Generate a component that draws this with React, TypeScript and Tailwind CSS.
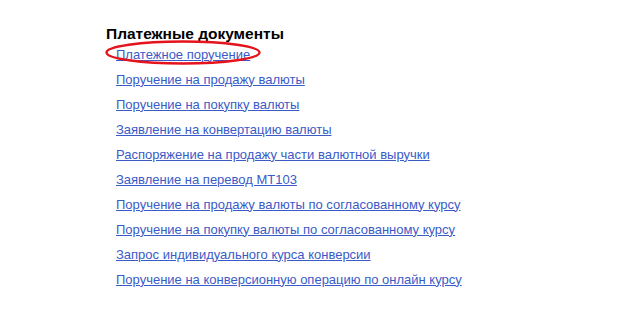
import React from "react";

const links = [
  "Платежное поручение",
  "Поручение на продажу валюты",
  "Поручение на покупку валюты",
  "Заявление на конвертацию валюты",
  "Распоряжение на продажу части валютной выручки",
  "Заявление на перевод MT103",
  "Поручение на продажу валюты по согласованному курсу",
  "Поручение на покупку валюты по согласованному курсу",
  "Запрос индивидуального курса конверсии",
  "Поручение на конверсионную операцию по онлайн курсу",
];

export default function App() {
  return (
    <div className="w-[640px] h-[320px] bg-white overflow-hidden" style={{ fontFamily: '"Liberation Sans", Arial, sans-serif' }}>
      <div className="pt-[25px] pl-[106px]">
        <h2 className="text-[15.5px] font-bold text-black leading-[17px]">Платежные документы</h2>
        <ul className="pl-[10px] flex flex-col">
          {links.map((l, i) => (
            <li key={l} className="h-[25px] flex items-center relative">
              <a href="#" className="text-[13px] text-[#3a5bc7] underline leading-[16px]">{l}</a>
              {i === 0 && (
                <svg className="absolute left-[-11px] top-[-2px]" width="158" height="26" viewBox="0 0 158 26">
                  <ellipse cx="78" cy="12.5" rx="76.5" ry="11" fill="none" stroke="#e5131b" strokeWidth="2.4" />
                </svg>
              )}
            </li>
          ))}
        </ul>
      </div>
    </div>
  );
}
